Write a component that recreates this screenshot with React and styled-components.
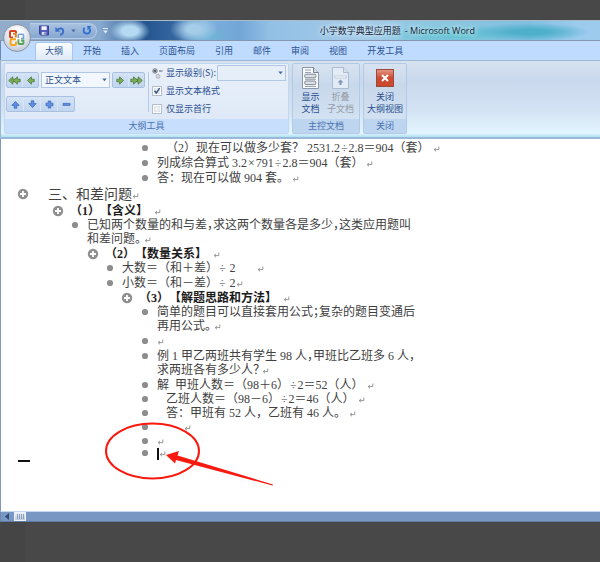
import React from 'react';
import styled, { createGlobalStyle, css } from 'styled-components';

const uiFont = `'Noto Sans CJK SC', 'Open Sans', sans-serif`;
const docFont = `'Liberation Serif', 'Noto Sans CJK SC', serif`;

const GlobalStyle = createGlobalStyle`
  *, *::before, *::after {
    box-sizing: border-box;
  }

  body {
    margin: 0;
    background: #474747;
  }

  button, select, input {
    margin: 0;
    padding: 0;
    font: inherit;
    color: inherit;
  }
`;

const Screen = styled.div`
  display: flex;
  flex-direction: column;
  min-height: 100vh;
  padding: 20px 0 40px;
  overflow: hidden;
  background: linear-gradient(90deg, #454545 25px, #484848 25px);
  font: 9px/12px ${uiFont};
  color: #2b4f8f;
`;

const Window = styled.main`
  position: relative;
  flex: 1;
  display: flex;
  flex-direction: column;
  background: #fff;
`;

/* title bar */

const TitleBar = styled.header`
  display: flex;
  align-items: center;
  height: 21px;
  padding: 0 125px 0 30px;
  border-top: 1px solid #a9bccb;
  border-bottom: 1px solid #8497ae;
  background:
    radial-gradient(ellipse 20px 12px at 130px 10px, #b4d9f2 40%, transparent),
    radial-gradient(ellipse 24px 14px at 194px 8px, #a5cce9 30%, transparent),
    radial-gradient(ellipse 26px 8px at 206px 15px, #6db4d4, transparent),
    radial-gradient(ellipse 60px 9px at 530px 11px, #4fb0cc 30%, transparent),
    radial-gradient(ellipse 70px 10px at 450px 13px, #63c3d3 20%, transparent),
    linear-gradient(90deg, #93acca 0, #88a9d0 100px, #24558f 145px, #3768a2 178px,
      #7db0dc 205px, #72a6d6 240px, #92c0e5 270px, #a4cae8 360px, #8dc7e2 420px,
      #83c0df 530px, #9dcbee 580px);
`;

const QuickAccess = styled.div`
  display: flex;
  align-items: center;
  gap: 6px;
  width: 67px;
  height: 16px;
  padding-left: 9px;
  border: 1px solid #b7cce5;
  border-left: 0;
  border-radius: 0 8px 8px 0;
  background: linear-gradient(#a9c1df, #86a7d0);
`;

const IconButton = styled.button`
  display: flex;
  align-items: center;
  justify-content: center;
  width: ${({ $width }) => $width || 10}px;
  height: 12px;
  border: 0;
  background: none;
`;

const Title = styled.h1`
  margin: 0 0 0 auto;
  font: 9px/18px ${uiFont};
  color: #16263a;
  white-space: pre;
  text-shadow: 0 0 4px #e4f3fc, 0 0 6px #e4f3fc;

  span {
    font-family: 'Open Sans', sans-serif;
  }
`;

const OfficeButton = styled.button`
  position: absolute;
  top: 4px;
  left: 3px;
  width: 28px;
  height: 28px;
  border: 1px solid #8b95a6;
  border-radius: 50%;
  background: radial-gradient(circle at 50% 35%, #fff 20%, #dce1ea 55%, #a9b3c4);
`;

/* ribbon */

const Tabs = styled.nav`
  display: flex;
  height: 19px;
  padding-left: 34px;
  border-left: 1px solid #6f88ad;
  background: #bfdbff;
`;

const Tab = styled.a`
  padding: 0 10px;
  line-height: 19px;
  color: #2b5293;
  text-decoration: none;
  white-space: nowrap;

  ${({ $active }) => $active && css`
    margin-top: 1px;
    line-height: 15px;
    border: 1px solid #a5c7ee;
    border-bottom: 0;
    border-radius: 3px 3px 0 0;
    padding: 0 9px;
    background: linear-gradient(#fbfdff, #dfe9f6);
  `}
`;

const Ribbon = styled.section`
  display: flex;
  gap: 3px;
  height: 79px;
  padding: 2px 0 3px 3px;
  border: solid #9ab8d8;
  border-width: 1px 0 2px 1px;
  background: linear-gradient(#d8e3f1, #c9d8ec 25%, #d3e3f4 65%, #e3f5ff 95%, #aee0f2);
`;

const Group = styled.div`
  display: flex;
  flex-direction: column;
  border: 1px solid ${({ $light }) => ($light ? '#c3d7ef' : '#b2cae5')};
  border-radius: 2px;
  background: ${({ $light }) =>
    $light ? 'linear-gradient(#e9f0fa, #dce7f6)' : 'linear-gradient(#d8e3f1, #c8d8eb 30%, #d6e6f5)'};
`;

const GroupBody = styled.div`
  flex: 1;
  display: flex;
  padding: ${({ $wide }) => ($wide ? '0 2px 0 1px' : '0 3px')};
`;

const GroupName = styled.div`
  height: 14px;
  line-height: 14px;
  text-align: center;
  color: #4973b0;
  background: ${({ $light }) => ($light ? '#c7defc' : '#bed5ef')};
`;

const OutlineTools = styled.div`
  display: flex;
  flex-direction: column;
  gap: 8px;
  margin: 8px 3px 0 0;
  padding-right: 3px;
  height: 40px;
  border-right: 1px solid #b4cbe7;
`;

const ToolRow = styled.div`
  display: flex;
  gap: 2px;
`;

const Segment = styled.div`
  display: flex;
  border: 1px solid #a9c1e1;
  border-radius: 2px;
  background: linear-gradient(#d5e3f5, #c0d5ef);

  button {
    width: ${({ $narrow }) => ($narrow ? 15 : 16)}px;
    height: 14px;
  }

  button + button {
    width: ${({ $narrow }) => ($narrow ? 16 : 17)}px;
    border-left: 1px solid #d9e6f7;
  }
`;

const SelectBox = styled.div`
  position: relative;
  width: 69px;

  select {
    appearance: none;
    display: block;
    width: 100%;
    height: 16px;
    padding-left: 3px;
    border: 1px solid #b0c8e6;
    border-radius: 0;
    background: ${({ $pale }) => ($pale ? '#e6eef9' : '#f2f7fd')};
  }

  svg {
    position: absolute;
    top: 6px;
    right: 3px;
    pointer-events: none;
  }
`;

const OptionRow = styled.div`
  display: flex;
  align-items: center;
  height: 18px;
  white-space: nowrap;

  label {
    width: ${({ $level }) => ($level ? 51 : 60)}px;
    margin-left: ${({ $level }) => ($level ? 3 : 4)}px;
  }
`;

const Check = styled.input`
  appearance: none;
  width: 10px;
  height: 10px;
  border: 1px solid #b3bfce;
  background: #eff2f6;
  box-shadow: inset 0 0 0 1px #fff, inset 0 0 3px #a5adb8;
`;

const CheckBox = styled.span`
  position: relative;
  display: flex;

  svg {
    position: absolute;
    top: 1px;
    left: 1px;
    pointer-events: none;
  }
`;

const BigButton = styled.button`
  display: flex;
  flex-direction: column;
  align-items: center;
  width: ${({ $width }) => $width}px;
  padding-top: 3px;
  border: 0;
  background: none;
  color: ${({ disabled }) => (disabled ? '#979da8' : '#2b4f8f')};
  white-space: pre;

  svg {
    margin-bottom: 2px;
  }
`;

/* document */

const Page = styled.article`
  position: relative;
  flex: 1;
  padding: 2px 0 0 16px;
  border-left: 1px solid #8397bd;
  font: 12px/14px ${docFont};
  color: #414141;
  text-spacing-trim: space-all;
`;

const Paragraph = styled.div`
  display: flex;
  gap: 6px;
  margin-left: ${({ $left }) => $left}px;
  padding-bottom: ${({ $spaced }) => ($spaced ? 1 : 0)}px;

  > svg {
    flex: none;
    margin-top: 1px;
  }

  ${({ $heading }) => $heading && css`
    font-weight: bold;
    color: #1c1c1c;
  `}

  ${({ $title }) => $title && css`
    gap: 19px;
    font-size: 14px;
    line-height: 18px;

    > svg {
      margin-top: 2px;
    }
  `}

  ${({ $last }) => $last && css`
    line-height: 10px;

    > svg {
      margin-top: -1px;
    }
  `}
`;

const Text = styled.p`
  margin: 0;
  white-space: pre;
  font-feature-settings: ${({ $trim }) => ($trim ? "'halt'" : 'normal')};
`;

const Operator = styled.span`
  padding: 0 1px;
`;

const Caret = styled.span`
  display: inline-block;
  width: 2px;
  height: 12px;
  margin: -2px 0;
  vertical-align: middle;
  background: #111;
`;

const EndMark = styled.div`
  width: 12px;
  height: 2px;
  margin: 1px 0 0 1px;
  background: #111;
`;

const Annotation = styled.svg`
  position: absolute;
  top: 280px;
  left: 99px;
`;

const ScrollBar = styled.div`
  display: flex;
  align-items: center;
  height: 11px;
  padding-left: 4px;
  gap: 5px;
  border-top: 1px solid #c4d8f2;
  border-bottom: 1px solid #5f7ba3;
  border-left: 1px solid #6f88ad;
  background: #7898c3;
`;

const Thumb = styled.div`
  display: flex;
  align-items: center;
  justify-content: center;
  width: 12px;
  height: 9px;
  border: 1px solid #eef3f9;
  background: linear-gradient(#e9eff7, #bccbe0);
`;

/* icons */

const rotations = { right: 0, down: 90, left: 180, up: 270 };

const ArrowIcon = ({ dir = 'right', double, color = '#7fae55', edge = '#3f6f35' }) => (
  <svg width={double ? 13 : 9} height="9" viewBox={double ? '0 0 13 9' : '0 0 9 9'}>
    <g
      transform={`rotate(${rotations[dir]} ${double ? 6.5 : 4.5} 4.5)`}
      fill={color}
      stroke={edge}
      strokeWidth="0.7"
    >
      <path d="M0.8 3.2H3.6V0.8L7.6 4.5 3.6 8.2V5.8H0.8Z" />
      {double && <path d="M6.6 3.2H8.2V0.8L12.3 4.5 8.2 8.2V5.8H6.6L8 4.5Z" />}
    </g>
  </svg>
);

const SignIcon = ({ plus }) => (
  <svg width="9" height="9" viewBox="0 0 9 9">
    <path
      d={plus ? 'M3.2 1H5.8V3.2H8V5.8H5.8V8H3.2V5.8H1V3.2H3.2Z' : 'M1 3.4H8V5.4H1Z'}
      fill="#6290e0"
      stroke="#3b66b8"
      strokeWidth="0.7"
    />
  </svg>
);

const DropIcon = () => (
  <svg width="5" height="4" viewBox="0 0 5 4">
    <path d="M0.3 0.5H4.7L2.5 3.3Z" fill="#44699f" />
  </svg>
);

const LogoArt = styled.svg`
  display: block;
  margin: 0 auto;
`;

const OfficeLogo = () => (
  <LogoArt width="18" height="18" viewBox="0 0 18 18" fill="none" strokeWidth="2">
    <path d="M8 4.5V2.8Q8 2 7 2H3Q2 2 2 3V7.5Q2 8.5 3 8.5H5" stroke="#d8431c" />
    <path d="M5 4.8H7.8V8.5" stroke="#ee7f22" />
    <path d="M10.3 9V6.2Q10.3 5.2 11.3 5.2H14.5Q15.5 5.2 15.5 6.2V9.5H13" stroke="#6ea5d4" strokeWidth="1.6" />
    <path d="M8 10.3H3.6Q2.6 10.3 2.6 11.3V15Q2.6 16 3.6 16H7Q8 16 8 15V12.5" stroke="#f5a81f" />
    <path d="M10.4 10.3V14Q10.4 15 11.4 15H14.5Q15.5 15 15.5 14V11.5H13" stroke="#58a45b" strokeWidth="1.8" />
  </LogoArt>
);

const SaveIcon = () => (
  <svg width="11" height="11" viewBox="0 0 11 11">
    <path d="M0.5 0.5H10.5V10.5H1.8L0.5 9.2Z" fill="#4d55b5" stroke="#353b91" />
    <path d="M2.7 0.8H8.5V5H2.7Z" fill="#eef2fb" />
    <path d="M3 7H8V10.3H3Z" fill="#d9def0" />
    <path d="M6 7.6H7.3V10H6Z" fill="#353b91" />
  </svg>
);

const UndoIcon = () => (
  <svg width="10" height="10" viewBox="0 0 10 10" fill="none" stroke="#3b6fc9" strokeWidth="1.9">
    <path d="M2 4.2C4.5 1.5 8.2 2 8.2 5.2C8.2 7.2 7 8.3 5.2 9" />
    <path d="M0.4 1V5.8H5.2Z" fill="#3b6fc9" stroke="none" />
  </svg>
);

const RedoIcon = () => (
  <svg width="11" height="11" viewBox="0 0 11 11" fill="none" stroke="#2f6fcf" strokeWidth="2">
    <path d="M2.8 2.5C0.8 4.5 1.4 8.8 5.3 8.9C9 8.9 9.8 5 7.8 3" />
    <path d="M5.8 0.5H10.5L6.2 5.2Z" fill="#2f6fcf" stroke="none" />
  </svg>
);

const CustomizeIcon = () => (
  <svg width="5" height="6" viewBox="0 0 5 6" fill="#dcebf9">
    <path d="M0 0H5V1H0ZM0 2.5H5L2.5 5.5Z" />
  </svg>
);

const LevelIcon = () => (
  <svg width="11" height="11" viewBox="0 0 11 11">
    <circle cx="3" cy="3" r="2.3" fill="#bcc0c7" stroke="#747a85" strokeWidth="0.8" />
    <path d="M1.8 3H4.2M3 1.8V4.2" stroke="#3d424b" />
    <path d="M7 3H10.5" stroke="#5a6372" />
    <circle cx="6" cy="8.4" r="2" fill="#d3d7dd" stroke="#979da7" strokeWidth="0.6" />
  </svg>
);

const TickIcon = () => (
  <svg width="8" height="8" viewBox="0 0 8 8">
    <path d="M1.5 3.7L3.4 6L6.6 1.2" fill="none" stroke="#31557f" strokeWidth="1.4" />
  </svg>
);

const ShowDocIcon = () => (
  <svg width="17" height="22" viewBox="0 0 17 22">
    <path d="M0.5 0.5H11.5L16.5 5.5V21.5H0.5Z" fill="#f8fafc" stroke="#8b98ab" />
    <path d="M11.5 0.5V5.5H16.5" fill="#d5dde8" stroke="#748399" />
    <path d="M3 3H9M3 5.5H9M3 12.3H14M3 19.5H14" stroke="#9aa3b0" />
    <rect x="2.8" y="7.2" width="11" height="3.6" rx="1" fill="#dce1e8" stroke="#7e8896" />
    <rect x="2.8" y="14" width="11" height="3.6" rx="1" fill="#dce1e8" stroke="#7e8896" />
  </svg>
);

const FoldDocIcon = () => (
  <svg width="17" height="22" viewBox="0 0 17 22">
    <path d="M0.5 0.5H11.5L16.5 5.5V21.5H0.5Z" fill="#e3ebf5" stroke="#aabbd2" />
    <path d="M11.5 0.5V5.5H16.5" fill="#d5e0ee" stroke="#aabbd2" />
    <path d="M2.5 9H14.5V11H2.5Z" fill="#f5f8fc" stroke="#a9b8cd" strokeWidth="0.6" />
    <path d="M8.5 12.5L11.5 15.5H9.5V18H7.5V15.5H5.5Z" fill="#7f97bb" />
  </svg>
);

const CloseIcon = () => (
  <svg width="18" height="22" viewBox="0 0 18 22">
    <defs>
      <linearGradient id="close" x1="0" y1="0" x2="0" y2="1">
        <stop offset="0" stopColor="#e29a86" />
        <stop offset="0.5" stopColor="#ce4a31" />
        <stop offset="1" stopColor="#c8492d" />
      </linearGradient>
    </defs>
    <rect x="0.5" y="2.5" width="17" height="17" fill="url(#close)" stroke="#9c4a3c" />
    <path d="M6 8L12 14M12 8L6 14" stroke="#fff" strokeWidth="2" />
  </svg>
);

const Bullet = () => (
  <svg width="12" height="12" viewBox="0 0 12 12">
    <circle cx="6" cy="6" r="3.1" fill="#8d8d8d" />
  </svg>
);

const Plus = () => (
  <svg width="12" height="12" viewBox="0 0 12 12">
    <circle cx="6" cy="6" r="5.2" fill="#8f8f8f" />
    <path d="M3 6H9M6 3V9" stroke="#fff" strokeWidth="1.8" />
  </svg>
);

const Return = () => (
  <svg width="7" height="6" viewBox="0 0 7 6" fill="none" stroke="#7f7f7f" strokeWidth="0.8">
    <path d="M5.8 0.5V3.6H1.5M3 1.9L1.2 3.6L3 5.3" />
  </svg>
);

const tabs = ['大纲', '开始', '插入', '页面布局', '引用', '邮件', '审阅', '视图', '开发工具'];

const paragraphs = [
  { left: 122, spaced: true, text: '   （2）现在可以做多少套？ 2531.2÷2.8＝904（套） ' },
  { left: 122, spaced: true, text: '列成综合算式 3.2×791÷2.8＝904（套） ' },
  { left: 122, spaced: true, text: '答：现在可以做 904 套。 ' },
  { left: 0, title: true, text: '三、和差问题' },
  { left: 35, heading: true, text: '（1）【含义】  ' },
  { left: 52, spaced: true, trim: true, text: '已知两个数量的和与差，求这两个数量各是多少，这类应用题叫\n和差问题。 ' },
  { left: 70, heading: true, text: '（2）【数量关系】  ' },
  { left: 87, spaced: true, text: '大数＝（和＋差）÷ 2       ' },
  { left: 87, spaced: true, text: '小数＝（和－差）÷ 2' },
  { left: 104, heading: true, text: '（3）【解题思路和方法】  ' },
  { left: 122, spaced: true, trim: true, text: '简单的题目可以直接套用公式；复杂的题目变通后\n再用公式。 ' },
  { left: 122, spaced: true, text: '' },
  { left: 122, spaced: true, trim: true, text: '例 1 甲乙两班共有学生 98 人，甲班比乙班多 6 人，\n求两班各有多少人？ ' },
  { left: 122, text: '解  甲班人数＝（98＋6）÷2＝52（人） ' },
  { left: 122, text: '   乙班人数＝（98－6）÷2＝46（人） ' },
  { left: 122, text: '   答：甲班有 52 人，乙班有 46 人。 ' },
  { left: 122, text: '         ' },
  { left: 122, text: '' },
  { left: 122, last: true, text: '' },
];

// a little air round the division and multiplication signs
const withOperators = (text) =>
  text.split(/([÷×])/).map((part, index) => (index % 2 ? <Operator key={index}>{part}</Operator> : part));

const renderParagraph = ({ left, heading, title, spaced, trim, last, text }, index) => (
  <Paragraph
    key={`paragraph-${index}`}
    $left={left}
    $heading={heading}
    $title={title}
    $spaced={spaced}
    $last={last}
  >
    {heading || title ? <Plus /> : <Bullet />}
    <Text $trim={trim}>
      {withOperators(text)}
      {last && <Caret />}
      <Return />
    </Text>
  </Paragraph>
);

const blue = { color: '#5f8fe6', edge: '#3560b5' };

const App = () => (
  <Screen>
    <GlobalStyle />
    <Window>
      <TitleBar>
        <QuickAccess>
          <IconButton aria-label="保存"><SaveIcon /></IconButton>
          <IconButton aria-label="撤消"><UndoIcon /></IconButton>
          <IconButton aria-label="撤消列表" $width={5}><DropIcon /></IconButton>
          <IconButton aria-label="重复"><RedoIcon /></IconButton>
        </QuickAccess>
        <IconButton aria-label="自定义快速访问工具栏" $width={16}><CustomizeIcon /></IconButton>
        <Title>小学数学典型应用题  <span>- Microsoft Word</span></Title>
      </TitleBar>
      <Tabs>
        {tabs.map((tab, index) => (
          <Tab key={tab} href="#" $active={index === 0}>{tab}</Tab>
        ))}
      </Tabs>
      <OfficeButton aria-label="Office"><OfficeLogo /></OfficeButton>

      <Ribbon>
        <Group $light>
          <GroupBody $wide>
            <OutlineTools>
              <ToolRow>
                <Segment $narrow>
                  <IconButton aria-label="提升至标题 1"><ArrowIcon dir="left" double /></IconButton>
                  <IconButton aria-label="升级"><ArrowIcon dir="left" /></IconButton>
                </Segment>
                <SelectBox>
                  <select aria-label="大纲级别" defaultValue="正文文本">
                    <option>正文文本</option>
                  </select>
                  <DropIcon />
                </SelectBox>
                <Segment $narrow>
                  <IconButton aria-label="降级"><ArrowIcon /></IconButton>
                  <IconButton aria-label="降级为正文"><ArrowIcon double /></IconButton>
                </Segment>
              </ToolRow>
              <ToolRow>
                <Segment>
                  <IconButton aria-label="上移"><ArrowIcon dir="up" {...blue} /></IconButton>
                  <IconButton aria-label="下移"><ArrowIcon dir="down" {...blue} /></IconButton>
                  <IconButton aria-label="展开"><SignIcon plus /></IconButton>
                  <IconButton aria-label="折叠"><SignIcon /></IconButton>
                </Segment>
              </ToolRow>
            </OutlineTools>
            <div>
              <OptionRow $level>
                <LevelIcon />
                <label htmlFor="level">显示级别(S):</label>
                <SelectBox $pale>
                  <select id="level" />
                  <DropIcon />
                </SelectBox>
              </OptionRow>
              <OptionRow>
                <CheckBox>
                  <Check type="checkbox" id="format" defaultChecked />
                  <TickIcon />
                </CheckBox>
                <label htmlFor="format">显示文本格式</label>
              </OptionRow>
              <OptionRow>
                <CheckBox>
                  <Check type="checkbox" id="first-line" />
                </CheckBox>
                <label htmlFor="first-line">仅显示首行</label>
              </OptionRow>
            </div>
          </GroupBody>
          <GroupName $light>大纲工具</GroupName>
        </Group>
        <Group>
          <GroupBody>
            <BigButton $width={29}><ShowDocIcon />{'显示\n文档'}</BigButton>
            <BigButton $width={31} disabled><FoldDocIcon />{'折叠\n子文档'}</BigButton>
          </GroupBody>
          <GroupName>主控文档</GroupName>
        </Group>
        <Group>
          <GroupBody>
            <BigButton $width={36}><CloseIcon />{'关闭\n大纲视图'}</BigButton>
          </GroupBody>
          <GroupName>关闭</GroupName>
        </Group>
      </Ribbon>

      <Page>
        {paragraphs.map(renderParagraph)}
        <EndMark />
        <Annotation width="180" height="70" viewBox="0 0 180 70">
          <ellipse cx="52.5" cy="32" rx="46.5" ry="27.5" fill="none" stroke="#f8190f" strokeWidth="2" />
          <path d="M66 36L79 32L77.5 36.5L173 65.5L172.5 66.5L76 41L75 44.5Z" fill="#f8190f" />
        </Annotation>
      </Page>
      <ScrollBar>
        <svg width="4" height="7" viewBox="0 0 4 7">
          <path d="M4 0V7L0 3.5Z" fill="#2f4a78" />
        </svg>
        <Thumb>
          <svg width="7" height="5" viewBox="0 0 7 5">
            <path d="M0.5 0V5M2.5 0V5M4.5 0V5M6.5 0V5" stroke="#8f9fb8" />
          </svg>
        </Thumb>
      </ScrollBar>
    </Window>
  </Screen>
);

export default App;
